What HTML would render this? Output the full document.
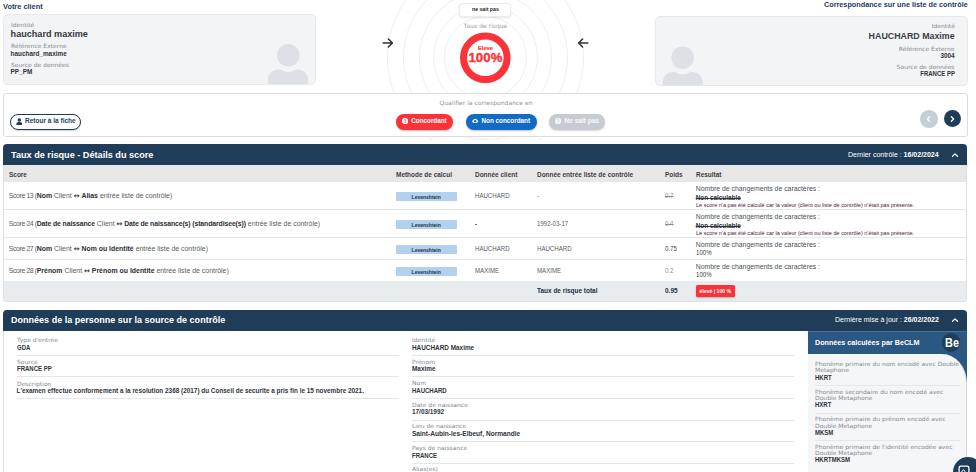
<!DOCTYPE html>
<html lang="fr">
<head>
<meta charset="utf-8">
<title>Correspondance</title>
<style>
*{box-sizing:border-box;margin:0;padding:0}
html,body{width:976px;height:472px;overflow:hidden;background:#fff}
body{position:relative;font-family:"Liberation Sans",sans-serif;color:#2b2f36;-webkit-font-smoothing:antialiased}
.abs{position:absolute;white-space:nowrap;line-height:1}
.lbl{transform:scaleX(1.062);transform-origin:0 50%;position:absolute;white-space:nowrap;line-height:1;font-family:"DejaVu Sans","Liberation Sans",sans-serif;font-size:5.7px;color:#84888f}
.uc{transform:scaleX(.94);transform-origin:0 50%}
.val{position:absolute;white-space:nowrap;line-height:1;font-weight:bold;font-size:6.4px;color:#30343b}
.h1{position:absolute;white-space:nowrap;line-height:1;font-weight:bold;font-size:7.4px;color:#1e3a5f}
.card{position:absolute;background:#f3f4f6;border:1px solid #e6e8ec;border-radius:5px;overflow:hidden}
.panel{position:absolute;background:#fff;border:1px solid #dcdcdc;border-radius:3px}
.hdr{position:absolute;background:#1f3c58;border-radius:4px 4px 0 0}
.hdr .t{transform:scaleX(1.062);transform-origin:0 50%;position:absolute;left:8px;color:#fff;font-weight:bold;font-size:8.6px;line-height:1;white-space:nowrap}
.hdr .r{transform:scaleX(1.095);transform-origin:0 50%;position:absolute;color:#fff;font-size:6.4px;line-height:1;white-space:nowrap}
.th{transform:scaleX(.898);transform-origin:0 50%;position:absolute;font-weight:bold;font-size:7.2px;line-height:6.1px;color:#3a3f46;white-space:nowrap}
.td{transform:scaleX(.897);transform-origin:0 50%;position:absolute;font-size:6.8px;line-height:6.1px;color:#595d66;white-space:nowrap}
.td b{color:#2b2f36}
.sep{position:absolute;height:1px;background:#e4e6ea}
.rowl{position:absolute;left:4px;width:963px;height:1px;background:#e3e6ea}
.lev{position:absolute;left:395.7px;width:61px;height:8.8px;background:#b3d1ee;border-radius:1px;font-weight:bold;font-size:5px;line-height:8.8px;padding-top:0.7px;text-align:center;color:#22303f}
.res{position:absolute;left:695.7px;white-space:nowrap;line-height:1;font-size:6.86px;color:#4d525a}
.small{transform:scaleX(1.07);transform-origin:0 50%;position:absolute;left:695.7px;white-space:nowrap;line-height:1;font-size:5.2px;color:#4a1a38}
.btn{position:absolute;height:16px;border-radius:8px;color:#fff;font-weight:bold;font-size:6.5px;line-height:15px;white-space:nowrap;box-shadow:0 1px 2px rgba(0,0,0,.25)}
</style>
</head>
<body>

<!-- concentric circles -->
<svg class="abs" style="left:366px;top:0;width:244px;height:140px" viewBox="366 0 244 140">
 <g fill="none" stroke="#e6e6e9" stroke-width="0.7">
  <circle cx="485.5" cy="57.5" r="41"/><circle cx="485.5" cy="57.5" r="52"/>
  <circle cx="485.5" cy="57.5" r="66"/><circle cx="485.5" cy="57.5" r="82"/><circle cx="485.5" cy="57.5" r="98"/>
 </g>
</svg>

<!-- top titles -->
<div class="h1" style="left:3px;top:2.6px">Votre client</div>
<div class="h1" style="right:8.3px;top:0.8px;font-size:7.28px">Correspondance sur une liste de contrôle</div>

<!-- left card -->
<div class="card" style="left:3px;top:14px;width:313px;height:70.5px">
 <svg class="abs" style="left:-1px;top:-1px;width:313px;height:70.5px" viewBox="3 14 313 70.5">
  <circle cx="288.3" cy="55.3" r="11.3" fill="#dde0e5"/>
  <path d="M268 84.5 v-5 a10 10 0 0 1 10 -10 h2.5 a14 14 0 0 0 15.600 0 h2 a10 10 0 0 1 10 10 v5z" fill="#dde0e5"/>
 </svg>
</div>
<div class="lbl" style="left:10.7px;top:22.6px">Identité</div>
<div class="abs" style="left:10.6px;top:29.9px;font-weight:bold;font-size:9.1px;color:#33363d">hauchard maxime</div>
<div class="lbl" style="left:10.7px;top:44.1px">Référence Externe</div>
<div class="val" style="left:10.6px;top:51.1px">hauchard_maxime</div>
<div class="lbl" style="left:10.7px;top:63.3px">Source de données</div>
<div class="val" style="left:10.6px;top:68.6px">PP_PM</div>

<!-- right card -->
<div class="card" style="left:655px;top:15.7px;width:312.5px;height:70px">
 <svg class="abs" style="left:-1px;top:-1px;width:312.5px;height:70px" viewBox="655 15.700 312.500 70">
  <circle cx="682.7" cy="57.5" r="11.3" fill="#dde0e5"/>
  <path d="M662.7 85.7 v-4 a10 10 0 0 1 10 -10 h2.2 a14 14 0 0 0 15.600 0 h2.200 a10 10 0 0 1 10 10 v4z" fill="#dde0e5"/>
 </svg>
</div>
<div class="lbl" style="transform-origin:100% 50%;right:21.4px;top:23.6px">Identité</div>
<div class="abs" style="right:21.4px;top:31.6px;font-weight:bold;font-size:8.85px;color:#3a3f47">HAUCHARD Maxime</div>
<div class="lbl" style="transform-origin:100% 50%;right:21.4px;top:46.6px">Référence Externe</div>
<div class="val" style="right:21.4px;top:52.6px">3004</div>
<div class="lbl" style="transform-origin:100% 50%;right:21.4px;top:65px">Source de données</div>
<div class="val uc" style="transform-origin:100% 50%;right:21.4px;top:70.6px">FRANCE PP</div>

<!-- center gauge -->
<div class="abs" style="left:459.4px;top:3.4px;width:52px;height:13.2px;background:#fff;border:1px solid #ececee;border-radius:3px;box-shadow:0 1px 2px rgba(0,0,0,.10);font-weight:bold;font-size:5.2px;line-height:11.4px;text-align:center;color:#222">ne sait pas</div>
<div class="abs" style="left:435.5px;width:100px;top:22.6px;text-align:center;font-family:'DejaVu Sans',sans-serif;font-size:6px;color:#9a9ea6">Taux de risque</div>
<svg class="abs" style="left:455px;top:27px;width:61px;height:61px" viewBox="455 27 61 61">
 <circle cx="485.3" cy="57.8" r="21.8" fill="#fff" stroke="#fb3237" stroke-width="7"/>
</svg>
<div class="abs" style="left:455.5px;width:60px;top:45.9px;text-align:center;font-weight:bold;font-size:5.7px;-webkit-text-stroke:0.15px #fb3237;color:#fb3237">Eleve</div>
<div class="abs" style="left:455.5px;width:60px;top:51.2px;text-align:center;font-weight:bold;font-size:13.2px;color:#fb3237;-webkit-text-stroke:0.35px #fb3237;letter-spacing:0.1px">100%</div>
<svg class="abs" style="left:382px;top:37px;width:12px;height:12px" viewBox="0 0 12 12"><path d="M1.200 6h9M6.400 2l4 4-4 4" fill="none" stroke="#2f3237" stroke-width="1.55" stroke-linecap="round" stroke-linejoin="round"/></svg>
<svg class="abs" style="left:577px;top:37px;width:12px;height:12px" viewBox="0 0 12 12"><path d="M10.800 6h-9M5.600 2l-4 4 4 4" fill="none" stroke="#2f3237" stroke-width="1.55" stroke-linecap="round" stroke-linejoin="round"/></svg>

<!-- action bar -->
<div class="panel" style="left:3px;top:93px;width:964.5px;height:43.5px;background:rgba(255,255,255,.88)"></div>
<div class="abs" style="left:385.500px;width:200px;top:101.3px;text-align:center;font-family:'DejaVu Sans',sans-serif;font-size:5.9px;transform:scaleX(1.03);color:#8f949c">Qualifier la correspondance en</div>
<div class="abs" style="left:10px;top:113.5px;width:71.2px;height:16.4px;border:1px solid #1e3a5f;border-radius:8px;background:#fff;box-shadow:0 1px 1.5px rgba(0,0,0,.18)"></div>
<svg class="abs" style="left:15.7px;top:117.7px;width:6.6px;height:7.7px" viewBox="0 0 6 7"><circle cx="3" cy="1.800" r="1.600" fill="#1e3a5f"/><path d="M0.300 6.500v-0.800a2 2 0 0 1 2-2h1.400a2 2 0 0 1 2 2v.8z" fill="#1e3a5f"/></svg>
<div class="abs" style="left:24.9px;top:118.4px;font-size:6.4px;font-weight:bold;color:#24406a;transform:scaleX(1.02);transform-origin:0 50%">Retour à la fiche</div>

<div class="btn" style="left:396px;top:113.6px;width:57px;background:#fb3237"></div>
<svg class="abs" style="left:402.1px;top:118px;width:6.2px;height:6.2px" viewBox="0 0 10 10"><circle cx="5" cy="5" r="5" fill="#fff"/><rect x="4.200" y="2" width="1.600" height="3.800" fill="#fb3237"/><rect x="4.200" y="6.700" width="1.600" height="1.600" fill="#fb3237"/></svg>
<div class="abs" style="left:411.3px;top:117.9px;font-size:6.3px;font-weight:bold;color:#fff">Concordant</div>

<div class="btn" style="left:466px;top:113.6px;width:70.7px;background:#116ac3"></div>
<svg class="abs" style="left:472.300px;top:118.8px;width:6.4px;height:4.6px" viewBox="0 0 14 10"><path d="M0 5C2.500 1.300 4.800 0 7 0s4.500 1.300 7 5c-2.500 3.700-4.800 5-7 5S2.500 8.700 0 5z" fill="#fff"/><circle cx="7" cy="5" r="2.600" fill="#116ac3"/></svg>
<div class="abs" style="left:481.5px;top:117.9px;font-size:6.33px;font-weight:bold;color:#fff">Non concordant</div>

<div class="btn" style="left:549.1px;top:113.6px;width:55.6px;background:#c6cbd3;box-shadow:0 1px 2px rgba(0,0,0,.15)"></div>
<svg class="abs" style="left:555.4px;top:118px;width:6.2px;height:6.2px" viewBox="0 0 10 10"><circle cx="5" cy="5" r="5" fill="#f7f8fa"/><path d="M3.500 3.900a1.600 1.600 0 1 1 2.300 1.400c-.5.300-.8.500-.8 1.100" fill="none" stroke="#c6cbd3" stroke-width="1.200"/><rect x="4.400" y="7" width="1.300" height="1.300" fill="#c6cbd3"/></svg>
<div class="abs" style="left:564.6px;top:117.9px;font-size:6.5px;font-weight:bold;color:#f7f8fa">Ne sait pas</div>

<div class="abs" style="left:920px;top:110px;width:17.500px;height:17.500px;border-radius:50%;background:#c6ced7"></div>
<svg class="abs" style="left:926px;top:115.700px;width:5px;height:6px" viewBox="0 0 5 6"><path d="M3.600 0.800L1.400 3l2.200 2.200" fill="none" stroke="#fbfcfd" stroke-width="1.450" stroke-linecap="round" stroke-linejoin="round"/></svg>
<div class="abs" style="left:943.600px;top:110.100px;width:17.300px;height:17.300px;border-radius:50%;background:#1f3c58"></div>
<svg class="abs" style="left:950px;top:115.700px;width:5px;height:6px" viewBox="0 0 5 6"><path d="M1.400 0.800L3.600 3 1.400 5.200" fill="none" stroke="#fff" stroke-width="1.300" stroke-linecap="round" stroke-linejoin="round"/></svg>

<!-- SECTION 1 -->
<div class="hdr" style="left:3.3px;top:143.7px;width:964.2px;height:21.5px">
 <div class="t" style="top:7.7px">Taux de risque - Détails du score</div>
 <div class="r" style="left:844.5px;top:7.9px">Dernier contrôle : <b>16/02/2024</b></div>
 <svg class="abs" style="left:947.700px;top:8.400px;width:8px;height:6px" viewBox="0 0 8 6"><path d="M1.500 4.300L4 1.900l2.500 2.400" fill="none" stroke="#fff" stroke-width="1.300" stroke-linecap="round" stroke-linejoin="round"/></svg>
</div>
<div class="abs" style="left:3.3px;top:165.200px;width:964.2px;height:136.900px;border:1px solid #dedfe2;border-top:0;border-radius:0 0 3px 3px;background:#fff;overflow:hidden">
 <div class="abs" style="left:0;top:0;width:964px;height:16.5px;background:#e7e7e8"></div>
 <div class="abs" style="left:0;top:116px;width:964px;height:21px;background:#e9ecef"></div>
</div>
<div class="th" style="left:8.8px;top:171.8px">Score</div>
<div class="th" style="left:395.7px;top:171.8px">Methode de calcul</div>
<div class="th" style="left:475px;top:171.8px">Donnée client</div>
<div class="th" style="left:537px;top:171.8px">Donnée entrée liste de contrôle</div>
<div class="th" style="left:665px;top:171.8px">Poids</div>
<div class="th" style="left:695.7px;top:171.8px">Resultat</div>

<div class="rowl" style="top:209px"></div>
<div class="rowl" style="top:237px"></div>
<div class="rowl" style="top:259px"></div>

<!-- row 1 -->
<div class="td" style="transform:none;font-size:6.93px;left:8.8px;top:192.9px"><span style="letter-spacing:-0.4px">Score 13 (</span><b>Nom</b> Client <span style="color:#2b2f36;font-family:'DejaVu Sans',sans-serif;font-weight:bold">↔</span> <b>Alias</b> entrée liste de contrôle)</div>
<div class="lev" style="top:192px">Levenshtein</div>
<div class="td" style="left:475px;top:193.2px">HAUCHARD</div>
<div class="td" style="left:537px;top:193.2px">-</div>
<div class="td" style="left:665px;top:193.2px;text-decoration:line-through;color:#8a8f97">0.7</div>
<div class="res" style="top:185.6px">Nombre de changements de caractères :</div>
<div class="val" style="left:695.7px;top:195.3px;text-decoration:line-through">Non calculable</div>
<div class="small" style="top:202.800px">Le score n'a pas été calculé car la valeur (client ou liste de contrôle) n'était pas présente.</div>

<!-- row 2 -->
<div class="td" style="transform:none;font-size:6.93px;left:8.8px;top:220.600px"><span style="letter-spacing:-0.4px">Score 24 (</span><b style="letter-spacing:-0.13px">Date de naissance</b> Client <span style="color:#2b2f36;font-family:'DejaVu Sans',sans-serif;font-weight:bold">↔</span> <b style="letter-spacing:-0.13px">Date de naissance(s) (standardisee(s))</b> entrée liste de contrôle)</div>
<div class="lev" style="top:220px">Levenshtein</div>
<div class="td" style="left:475px;top:220.800px;color:#2b2f36;font-weight:bold">-</div>
<div class="td" style="left:537px;top:220.800px">1992-03-17</div>
<div class="td" style="left:665px;top:220.800px;text-decoration:line-through;color:#8a8f97">0.4</div>
<div class="res" style="top:213.6px">Nombre de changements de caractères :</div>
<div class="val" style="left:695.7px;top:222.500px;text-decoration:line-through">Non calculable</div>
<div class="small" style="top:231px">Le score n'a pas été calculé car la valeur (client ou liste de contrôle) n'était pas présente.</div>

<!-- row 3 -->
<div class="td" style="transform:none;font-size:6.93px;left:8.8px;top:245.600px"><span style="letter-spacing:-0.4px">Score 27 (</span><b>Nom</b> Client <span style="color:#2b2f36;font-family:'DejaVu Sans',sans-serif;font-weight:bold">↔</span> <b>Nom ou Identité</b> entrée liste de contrôle)</div>
<div class="lev" style="top:245px">Levenshtein</div>
<div class="td" style="left:475px;top:245.800px">HAUCHARD</div>
<div class="td" style="left:537px;top:245.800px">HAUCHARD</div>
<div class="td" style="left:665px;top:245.800px;color:#3a3f46">0.75</div>
<div class="res" style="top:241.6px">Nombre de changements de caractères :</div>
<div class="td" style="left:695.7px;top:249.800px;color:#3a3f46">100%</div>

<!-- row 4 -->
<div class="td" style="transform:none;font-size:6.93px;left:8.8px;top:267.600px"><span style="letter-spacing:-0.4px">Score 28 (</span><b>Prénom</b> Client <span style="color:#2b2f36;font-family:'DejaVu Sans',sans-serif;font-weight:bold">↔</span> <b>Prénom ou Identite</b> entrée liste de contrôle)</div>
<div class="lev" style="top:267px">Levenshtein</div>
<div class="td" style="left:475px;top:268.4px">MAXIME</div>
<div class="td" style="left:537px;top:268.4px">MAXIME</div>
<div class="td" style="left:665px;top:268.4px;color:#8a8f97">0.2</div>
<div class="res" style="top:263.6px">Nombre de changements de caractères :</div>
<div class="td" style="left:695.7px;top:271.800px;color:#3a3f46">100%</div>

<!-- total row -->
<div class="th" style="left:537px;top:287.9px;color:#22303f">Taux de risque total</div>
<div class="th" style="left:665px;top:287.9px;color:#22303f">0.95</div>
<div class="abs" style="left:695.7px;top:285px;width:39.300px;height:12px;background:#fb3237;border-radius:1.5px;box-shadow:0 1px 2px rgba(0,0,0,.25);color:#fff;font-weight:bold;font-size:5.1px;line-height:12px;text-align:center">élevé | 100 %</div>

<!-- SECTION 2 -->
<div class="hdr" style="left:3.3px;top:309.600px;width:964.2px;height:21.500px">
 <div class="t" style="top:6.600px;font-size:8.5px">Données de la personne sur la source de contrôle</div>
 <div class="r" style="left:832.200px;top:7.300px">Dernière mise à jour : <b>26/02/2022</b></div>
 <svg class="abs" style="left:947.700px;top:7.400px;width:8px;height:6px" viewBox="0 0 8 6"><path d="M1.500 4.300L4 1.900l2.500 2.400" fill="none" stroke="#fff" stroke-width="1.300" stroke-linecap="round" stroke-linejoin="round"/></svg>
</div>
<div class="abs" style="left:3.3px;top:331px;width:964.2px;height:145px;border:1px solid #dedfe2;border-top:0;background:#fff"></div>

<!-- left column -->
<div class="lbl" style="left:16.5px;top:338.2px">Type d'entrée</div>
<div class="val uc" style="left:16.5px;top:345.1px">GDA</div>
<div class="sep" style="left:16.5px;top:354.800px;width:382px"></div>
<div class="lbl" style="left:16.5px;top:359.8px">Source</div>
<div class="val uc" style="left:16.5px;top:365.600px">FRANCE PP</div>
<div class="sep" style="left:16.5px;top:376px;width:382px"></div>
<div class="lbl" style="left:16.5px;top:382px">Description</div>
<div class="val" style="left:16.5px;top:387.7px">L'examen effectue conformement a la resolution 2368 (2017) du Conseil de securite a pris fin le 15 novembre 2021.</div>
<div class="sep" style="left:16.5px;top:398px;width:382px"></div>

<!-- middle column -->
<div class="lbl" style="left:412px;top:338.2px">Identité</div>
<div class="val" style="left:412px;top:345.1px">HAUCHARD Maxime</div>
<div class="sep" style="left:412px;top:354.800px;width:382px"></div>
<div class="lbl" style="left:412px;top:359.8px">Prénom</div>
<div class="val" style="left:412px;top:365.600px">Maxime</div>
<div class="sep" style="left:412px;top:376px;width:382px"></div>
<div class="lbl" style="left:412px;top:381.1px">Nom</div>
<div class="val uc" style="left:412px;top:387.6px">HAUCHARD</div>
<div class="sep" style="left:412px;top:398px;width:382px"></div>
<div class="lbl" style="left:412px;top:403.1px">Date de naissance</div>
<div class="val" style="left:412px;top:409.3px">17/03/1992</div>
<div class="sep" style="left:412px;top:419.600px;width:382px"></div>
<div class="lbl" style="left:412px;top:423.600px">Lieu de naissance</div>
<div class="val" style="left:412px;top:430.600px;transform:scaleX(1.026);transform-origin:0 50%">Saint-Aubin-les-Elbeuf, Normandie</div>
<div class="sep" style="left:412px;top:441px;width:382px"></div>
<div class="lbl" style="left:412px;top:446.4px">Pays de naissance</div>
<div class="val uc" style="left:412px;top:453px">FRANCE</div>
<div class="sep" style="left:412px;top:463px;width:382px"></div>
<div class="lbl" style="left:412px;top:467.3px">Alias(es)</div>

<!-- BeCLM panel -->
<div class="abs" style="left:808px;top:331px;width:159px;height:141px;background:#2b5882;border-top:1px solid #4a7199"></div>
<div class="abs" style="left:808px;top:353.600px;width:159px;height:120px;background:#f5f6f8;border-top-right-radius:25px 29px;border-right:1px solid #d3d6db"></div>
<div class="abs" style="left:815px;top:339.7px;font-weight:bold;font-size:7.18px;color:#fff">Données calculées par BeCLM</div>
<div class="abs" style="left:941.5px;top:333.2px;width:18.600px;height:18.600px;border-radius:50%;background:#1f3c58"></div>
<div class="abs" style="left:942px;top:336.2px;width:20px;text-align:center;font-weight:bold;font-size:13.6px;transform:scaleX(.8);color:#fff">Be</div>

<div class="lbl" style="left:815px;top:361.200px;line-height:6.200px;white-space:normal;width:150px">Phonème primaire du nom encodé avec Double<br>Metaphone</div>
<div class="val uc" style="left:815px;top:375.1px">HKRT</div>
<div class="sep" style="left:815px;top:385px;width:145px"></div>
<div class="lbl" style="left:815px;top:388.800px;line-height:6.200px;white-space:normal;width:150px">Phonème secondaire du nom encodé avec<br>Double Metaphone</div>
<div class="val uc" style="left:815px;top:402px">HXRT</div>
<div class="sep" style="left:815px;top:412.800px;width:145px"></div>
<div class="lbl" style="left:815px;top:416.400px;line-height:6.200px;white-space:normal;width:150px">Phonème primaire du prénom encodé avec<br>Double Metaphone</div>
<div class="val uc" style="left:815px;top:429.600px">MKSM</div>
<div class="sep" style="left:815px;top:440px;width:145px"></div>
<div class="lbl" style="left:815px;top:444px;line-height:6.200px;white-space:normal;width:150px">Phonème primaire de l'identité encodée avec<br>Double Metaphone</div>
<div class="val uc" style="left:815px;top:457px">HKRTMKSM</div>

<!-- floating button -->
<div class="abs" style="left:952.6px;top:457px;width:30px;height:30px;border-radius:50%;background:#1f3c58"></div>
<svg class="abs" style="left:957px;top:464px;width:14px;height:8px" viewBox="957 464 14 8"><rect x="959.1" y="466.1" width="9.8" height="10" rx="1.8" fill="none" stroke="#fff" stroke-width="1.3"/><path d="M961.6 472l1.900-2.300 1.900 2.300" fill="none" stroke="#fff" stroke-width="1"/></svg>

</body>
</html>
